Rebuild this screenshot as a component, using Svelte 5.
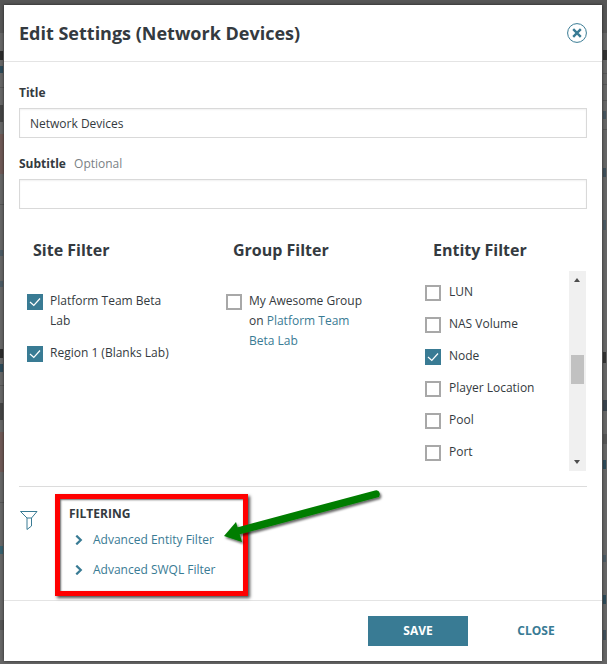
<script>
	const sites = [
		{ label: 'Platform Team Beta Lab', checked: true },
		{ label: 'Region 1 (Blanks Lab)', checked: true }
	];
	const entities = [
		{ label: 'LUN', checked: false },
		{ label: 'NAS Volume', checked: false },
		{ label: 'Node', checked: true },
		{ label: 'Player Location', checked: false },
		{ label: 'Pool', checked: false },
		{ label: 'Port', checked: false }
	];
	const links = ['Advanced Entity Filter', 'Advanced SWQL Filter'];

	// bits of the dimmed page that show on either side of the modal
	const behind = [
		{ x: 0, y: 0, w: 607, h: 33, c: '#565656' },
		{ x: 0, y: 51, w: 3, h: 9, c: '#2b2b2b' },
		{ x: 0, y: 66, w: 3, h: 7, c: '#2d4a58' },
		{ x: 0, y: 87, w: 4, h: 1, c: '#555' },
		{ x: 0, y: 105, w: 3, h: 17, c: '#444' },
		{ x: 0, y: 134, w: 4, h: 40, c: '#6e5855' },
		{ x: 0, y: 204, w: 4, h: 1, c: '#555' },
		{ x: 0, y: 250, w: 3, h: 6, c: '#4b5a64' },
		{ x: 0, y: 281, w: 3, h: 6, c: '#4b5a64' },
		{ x: 0, y: 349, w: 3, h: 9, c: '#2b2b2b' },
		{ x: 0, y: 364, w: 3, h: 8, c: '#2d4a58' },
		{ x: 0, y: 385, w: 4, h: 1, c: '#555' },
		{ x: 0, y: 403, w: 3, h: 17, c: '#444' },
		{ x: 0, y: 432, w: 4, h: 40, c: '#6e5855' },
		{ x: 0, y: 502, w: 4, h: 1, c: '#555' },
		{ x: 0, y: 546, w: 3, h: 8, c: '#37606e' },
		{ x: 0, y: 620, w: 4, h: 10, c: '#555' },
		{ x: 603, y: 50, w: 4, h: 10, c: '#333' },
		{ x: 603, y: 73, w: 4, h: 1, c: '#555' },
		{ x: 603, y: 84, w: 4, h: 1, c: '#555' },
		{ x: 603, y: 100, w: 4, h: 1, c: '#555' },
		{ x: 603, y: 111, w: 3, h: 8, c: '#46545e' },
		{ x: 603, y: 129, w: 4, h: 1, c: '#555' },
		{ x: 603, y: 168, w: 3, h: 9, c: '#3f4f5a' },
		{ x: 603, y: 220, w: 3, h: 10, c: '#4b5a64' },
		{ x: 603, y: 352, w: 3, h: 11, c: '#333' },
		{ x: 603, y: 400, w: 4, h: 11, c: '#39434c' },
		{ x: 603, y: 434, w: 4, h: 10, c: '#555' },
		{ x: 603, y: 460, w: 3, h: 9, c: '#2d4a58' },
		{ x: 603, y: 555, w: 3, h: 7, c: '#4b5a64' },
		{ x: 603, y: 595, w: 3, h: 9, c: '#2d4a58' },
		{ x: 603, y: 630, w: 3, h: 10, c: '#3f4f5a' }
	];
</script>

{#snippet box(checked)}
	<span class="box" class:checked>
		{#if checked}
			<svg viewBox="0 0 16 16" width="16" height="16"><path d="M3 8 L6.8 11.5 L13 4.5" fill="none" stroke="#fff" stroke-width="1.2" /></svg>
		{/if}
	</span>
{/snippet}

<div class="page">
	{#each behind as b}
		<span class="bit" style="left:{b.x}px;top:{b.y}px;width:{b.w}px;height:{b.h}px;background:{b.c}"></span>
	{/each}

	<div class="modal">
		<header>
			<h2>Edit Settings (Network Devices)</h2>
			<svg class="close-icon" viewBox="0 0 20 20" width="20" height="20">
				<circle cx="10" cy="10" r="9.4" fill="none" stroke="#397b94" stroke-width="1" />
				<path d="M6.2 6.2 L13.8 13.8 M13.8 6.2 L6.2 13.8" stroke="#397b94" stroke-width="2.4" />
			</svg>
		</header>

		<div class="fields">
			<div class="label">Title</div>
			<input type="text" value="Network Devices" />
			<div class="label second">Subtitle <span class="optional">Optional</span></div>
			<input type="text" />
		</div>

		<div class="filters">
			<section class="site">
				<h3>Site Filter</h3>
				<div class="list">
					{#each sites as s}
						<div class="check">
							{@render box(s.checked)}
							<span class="text">{s.label}</span>
						</div>
					{/each}
				</div>
			</section>
			<section class="group">
				<h3>Group Filter</h3>
				<div class="list">
					<div class="check">
						{@render box(false)}
						<span class="text">My Awesome Group on <span class="link">Platform Team Beta Lab</span></span>
					</div>
				</div>
			</section>
			<section class="entity">
				<h3>Entity Filter</h3>
				<div class="scroller">
					<div class="rows">
						{#each entities as e}
							<div class="row">
								{@render box(e.checked)}
								<span class="text">{e.label}</span>
							</div>
						{/each}
					</div>
					<div class="scrollbar">
						<span class="up"></span>
						<span class="thumb"></span>
						<span class="down"></span>
					</div>
				</div>
			</section>
		</div>

		<div class="advanced">
			<svg class="funnel" viewBox="0 0 18 19" width="18" height="19">
				<path d="M0.5 0.5 H17 L11.5 7 H7 Z M7 7 V18.5 L11.5 15 V7" fill="none" stroke="#397b94" stroke-width="1" />
			</svg>
			<div class="adv-body">
				<div class="adv-title">FILTERING</div>
				{#each links as l}
					<div class="adv-link">
						<svg viewBox="0 0 8 10" width="8" height="10"><path d="M1.3 0.6 L5.8 5 L1.3 9.4" fill="none" stroke="#397b94" stroke-width="2.2" /></svg>
						<span>{l}</span>
					</div>
				{/each}
			</div>
			<div class="callout"></div>
		</div>

		<footer>
			<button class="save">SAVE</button>
			<button class="close">CLOSE</button>
		</footer>
	</div>

	<svg class="arrow" viewBox="0 0 607 664" width="607" height="664">
		<defs>
			<filter id="sh" x="-20%" y="-20%" width="140%" height="140%">
				<feDropShadow dx="1.5" dy="2" stdDeviation="1" flood-color="#000" flood-opacity="0.6" />
			</filter>
		</defs>
		<g filter="url(#sh)" fill="#067d06">
			<path d="M376 494 L238 531" stroke="#067d06" stroke-width="7.5" stroke-linecap="round" fill="none" />
			<path d="M224 536 L236 522 L242 542 Z" />
		</g>
	</svg>
</div>

<style>
	:global(body) {
		margin: 0;
		font-family: 'Open Sans', sans-serif;
	}

	.page {
		position: relative;
		width: 607px;
		height: 664px;
		overflow: hidden;
		background: #666;
		padding: 5px 0 0 4px;
		box-sizing: border-box;
		color: #343a40;
	}

	.bit {
		position: absolute;
	}

	.modal {
		position: relative;
		width: 598px;
		height: 656px;
		background: #fff;
		display: flex;
		flex-direction: column;
		box-shadow: 0 0 3px rgba(0, 0, 0, 0.6);
	}

	header {
		height: 57px;
		box-sizing: border-box;
		border-bottom: 1px solid #e4e4e4;
		padding: 0 15px;
		display: flex;
		align-items: center;
		justify-content: space-between;
		flex: none;
	}

	h2 {
		margin: 0;
		font-size: 18px;
		font-weight: 700;
		color: #343a40;
	}

	.fields {
		padding: 0 15px;
		display: flex;
		flex-direction: column;
	}

	.label {
		font-size: 12px;
		font-weight: 700;
		line-height: 16px;
		margin: 23px 0 7px;
	}

	.label.second {
		margin-top: 18px;
	}

	.optional {
		font-weight: 400;
		color: #7a7f85;
		margin-left: 5px;
	}

	input {
		width: 568px;
		height: 30px;
		box-sizing: border-box;
		border: 1px solid #d9d9d9;
		box-shadow: inset 0 1px 2px rgba(0, 0, 0, 0.06);
		padding: 0 10px;
		margin: 0;
		font: 12px 'Open Sans', sans-serif;
		color: #343a40;
		outline: none;
	}

	.filters {
		display: flex;
		padding: 0 15px 0 23px;
		margin-top: 30px;
		height: 247px;
		flex: none;
	}

	section {
		width: 199px;
		flex: none;
	}

	h3 {
		margin: 0 0 0 6px;
		font-size: 16px;
		font-weight: 700;
		line-height: 22px;
		color: #343a40;
	}

	.group h3 {
		margin-left: 7px;
	}

	.entity h3 {
		margin-left: 8px;
	}

	.list {
		margin-top: 30px;
		display: flex;
		flex-direction: column;
		gap: 12px;
	}

	.check {
		display: flex;
		gap: 7px;
		font-size: 12px;
		line-height: 20px;
		width: 150px;
	}

	.box {
		width: 16px;
		height: 16px;
		flex: none;
		box-sizing: border-box;
		border: 2px solid #a8a8a8;
		background: #fff;
		margin-top: 3px;
		display: block;
	}

	.box.checked {
		border: 0;
		background: #397b94;
	}

	.box svg {
		display: block;
	}

	.link {
		color: #397b94;
	}

	.scroller {
		margin-top: 10px;
		height: 200px;
		display: flex;
		width: 161px;
		justify-content: space-between;
		overflow: hidden;
	}

	.rows {
		display: flex;
		flex-direction: column;
		gap: 12px;
		padding-top: 11px;
	}

	.row {
		display: flex;
		gap: 8px;
		font-size: 12px;
		line-height: 20px;
	}

	.scrollbar {
		width: 17px;
		background: #f0f0f0;
		position: relative;
		flex: none;
	}

	.up,
	.down {
		position: absolute;
		left: 5px;
		width: 0;
		height: 0;
		border-left: 3.5px solid transparent;
		border-right: 3.5px solid transparent;
	}

	.up {
		top: 7px;
		border-bottom: 4px solid #4d4d4d;
	}

	.down {
		bottom: 7px;
		border-top: 4px solid #4d4d4d;
	}

	.thumb {
		position: absolute;
		left: 2px;
		top: 84px;
		width: 13px;
		height: 29px;
		background: #c1c1c1;
	}

	.advanced {
		position: relative;
		margin: 0 15px;
		border-top: 1px solid #dcdcdc;
		height: 114px;
		box-sizing: border-box;
		flex: none;
		display: flex;
		padding-top: 24px;
	}

	.funnel {
		margin-left: 1px;
		flex: none;
	}

	.adv-body {
		margin-left: 31px;
	}

	.adv-title {
		font-size: 12px;
		font-weight: 700;
		line-height: 16px;
		margin-top: -5px;
	}

	.adv-link {
		display: flex;
		align-items: center;
		gap: 10px;
		font-size: 12px;
		line-height: 20px;
		color: #397b94;
		margin: 8px 0 10px 6px;
	}

	/* annotation drawn over the screenshot */
	.callout {
		position: absolute;
		left: 36px;
		top: 7px;
		width: 193px;
		height: 102px;
		box-sizing: border-box;
		border: 5px solid #f00;
		box-shadow: 2px 2px 3px rgba(0, 0, 0, 0.7), inset 1px 1px 2px rgba(0, 0, 0, 0.6);
	}

	footer {
		border-top: 1px solid #e4e4e4;
		flex: 1;
		display: flex;
		align-items: flex-start;
		padding: 15px 0 0 364px;
	}

	button {
		font: 700 12px 'Open Sans', sans-serif;
		border: 0;
		height: 30px;
		padding: 0 0 1px;
	}

	.save {
		width: 100px;
		background: #397b94;
		color: #fff;
	}

	.close {
		width: 100px;
		margin-left: 18px;
		background: none;
		color: #397b94;
	}

	.arrow {
		position: absolute;
		left: 0;
		top: 0;
		pointer-events: none;
	}
</style>
